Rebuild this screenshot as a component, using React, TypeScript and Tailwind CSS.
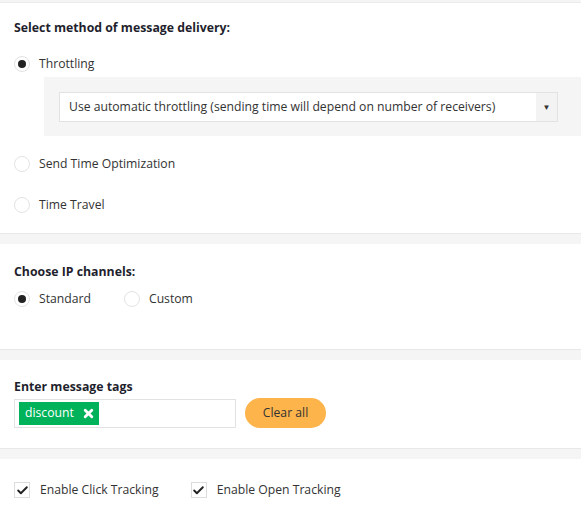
import { Check } from "lucide-react";

function Radio({ checked, label }: { checked?: boolean; label: string }) {
  return (
    <label className="flex items-center gap-[9px] text-[#333]">
      <span className="w-4 h-4 rounded-full border border-[#e3e3e3] bg-white flex items-center justify-center">
        {checked && <span className="w-2 h-2 rounded-full bg-[#222]" />}
      </span>
      <span>{label}</span>
    </label>
  );
}

function CheckBox({ label }: { label: string }) {
  return (
    <label className="flex items-center gap-[10px] text-[#333]">
      <span className="w-4 h-4 border border-[#ddd] bg-white flex items-center justify-center">
        <Check size={13} strokeWidth={3.5} className="text-[#222]" />
      </span>
      <span>{label}</span>
    </label>
  );
}

function Gap() {
  return <div className="h-[11px] bg-[#f5f5f5] border-t border-[#e8e8e8]" />;
}

export default function App() {
  return (
    <div className="w-[581px] h-[525px] bg-white overflow-hidden text-[12.2px] font-['Open_Sans',sans-serif]">
      <div className="h-[3px] bg-[#f5f5f5] border-b border-[#ececec]" />

      <section className="h-[230px] px-[14px] pt-[16px]">
        <h3 className="font-bold text-[12.3px] text-[#1f1f2e] leading-[18px]">Select method of message delivery:</h3>
        <div className="mt-[18px]">
          <Radio checked label="Throttling" />
        </div>
        <div className="ml-[30px] -mr-[14px] mt-[4px] bg-[#f5f5f5] h-[59px] px-[15px] pt-[15px]">
          <div className="h-[30px] w-[499px] bg-white border border-[#e2e2e2] flex items-center">
            <span className="flex-1 pl-[9px] text-[#333]">
              Use automatic throttling (sending time will depend on number of receivers)
            </span>
            <span className="w-[21px] h-full bg-[#f3f3f3] flex items-center justify-center text-[#333] text-[8px]">
              ▼
            </span>
          </div>
        </div>
        <div className="mt-[19px]">
          <Radio label="Send Time Optimization" />
        </div>
        <div className="mt-[22px]">
          <Radio label="Time Travel" />
        </div>
      </section>

      <Gap />

      <section className="h-[105px] px-[14px] pt-[19px]">
        <h3 className="font-bold text-[12.3px] text-[#1f1f2e] leading-[18px]">Choose IP channels:</h3>
        <div className="flex gap-[33px] mt-[9px]">
          <Radio checked label="Standard" />
          <Radio label="Custom" />
        </div>
      </section>

      <Gap />

      <section className="h-[88px] px-[14px] pt-[18px]">
        <h3 className="font-bold text-[12.3px] text-[#1f1f2e] leading-[18px]">Enter message tags</h3>
        <div className="flex items-center gap-[9px] mt-[2px]">
          <div className="w-[222px] h-[29px] border border-[#e2e2e2] bg-white flex items-center px-[4px]">
            <span className="h-[23px] bg-[#00b25a] text-white flex items-center pl-[6px] pr-[5px] gap-[9px]">
              discount
              <svg width="11" height="11" viewBox="0 0 10 10">
                <path d="M2 2 L8 8 M8 2 L2 8" stroke="white" strokeWidth="2.6" strokeLinecap="round" />
              </svg>
            </span>
          </div>
          <button className="h-[30px] w-[81px] rounded-full bg-[#fdb44b] text-[#333]">Clear all</button>
        </div>
      </section>

      <Gap />

      <section className="px-[14px] pt-[22px] flex gap-[32px]">
        <CheckBox label="Enable Click Tracking" />
        <CheckBox label="Enable Open Tracking" />
      </section>
    </div>
  );
}
